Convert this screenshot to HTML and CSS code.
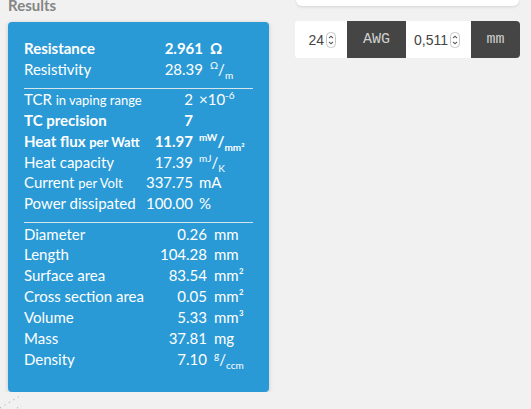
FILE: index.html
```html
<!DOCTYPE html>
<html lang="en">
<head>
    <meta charset="UTF-8">
    <meta name="viewport" content="width=device-width, initial-scale=1.0">
    <title>Coil Results</title>
    <link rel="stylesheet" href="styles.css">
</head>
<body>
    <div class="page">
        <div class="results-col">
            <h2>Results</h2>
            <div class="card">
                <div class="section sec1">
                    <span class="label strong">Resistance</span><span class="value strong">2.961</span><span class="unit strong">&Omega;</span>
                    <span class="label">Resistivity</span><span class="value">28.39</span><span class="unit"><sup>&Omega;</sup>/<sub>m</sub></span>
                </div>
                <hr>
                <div class="section sec2">
                    <span class="label">TCR <small>in vaping range</small></span><span class="value">2</span><span class="unit">&times;10<sup>-6</sup></span>
                    <span class="label strong">TC precision</span><span class="value strong">7</span><span class="unit"></span>
                    <span class="label strong">Heat flux <small>per Watt</small></span><span class="value strong">11.97</span><span class="unit strong"><sup>mW</sup>/<sub>mm&sup2;</sub></span>
                    <span class="label">Heat capacity</span><span class="value">17.39</span><span class="unit"><sup>mJ</sup>/<sub>K</sub></span>
                    <span class="label">Current <small>per Volt</small></span><span class="value">337.75</span><span class="unit">mA</span>
                    <span class="label">Power dissipated</span><span class="value">100.00</span><span class="unit">%</span>
                </div>
                <hr>
                <div class="section sec3">
                    <span class="label">Diameter</span><span class="value">0.26</span><span class="unit">mm</span>
                    <span class="label">Length</span><span class="value">104.28</span><span class="unit">mm</span>
                    <span class="label">Surface area</span><span class="value">83.54</span><span class="unit">mm&sup2;</span>
                    <span class="label">Cross section area</span><span class="value">0.05</span><span class="unit">mm&sup2;</span>
                    <span class="label">Volume</span><span class="value">5.33</span><span class="unit">mm&sup3;</span>
                    <span class="label">Mass</span><span class="value">37.81</span><span class="unit">mg</span>
                    <span class="label">Density</span><span class="value">7.10</span><span class="unit"><sup>g</sup>/<sub>ccm</sub></span>
                </div>
            </div>
        </div>
        <div class="wire-col">
            <div class="panel-top"></div>
            <div class="gauge-row">
                <div class="num-box first">24<svg class="spin" width="10" height="16" viewBox="0 0 10 16"><rect x="0.5" y="0.5" width="9" height="15" rx="4" fill="#fff" stroke="#c4c4c4"/><path d="M3 6.2 L5 4.2 L7 6.2 M3 9.8 L5 11.8 L7 9.8" fill="none" stroke="#555" stroke-width="1.1"/></svg></div>
                <div class="unit-box">AWG</div>
                <div class="num-box">0,511<svg class="spin" width="10" height="16" viewBox="0 0 10 16"><rect x="0.5" y="0.5" width="9" height="15" rx="4" fill="#fff" stroke="#c4c4c4"/><path d="M3 6.2 L5 4.2 L7 6.2 M3 9.8 L5 11.8 L7 9.8" fill="none" stroke="#555" stroke-width="1.1"/></svg></div>
                <div class="unit-box last">mm</div>
            </div>
        </div>
    </div>
    <svg class="corner-dots" width="24" height="16" viewBox="0 0 24 16"><path d="M0 15 L20 3" stroke="#bbb" stroke-width="1.2" stroke-dasharray="1.2 4" fill="none"/><path d="M17 15 L21 13" stroke="#bbb" stroke-width="1.2" stroke-dasharray="1.2 3" fill="none"/></svg>
</body>
</html>
```

FILE: styles.css
```css
body {
    margin: 0;
    padding: 0;
    background: #f1f1f1;
    font-family: Lato, 'Open Sans', sans-serif;
    overflow: hidden;
}
.page {
    display: flex;
    align-items: flex-start;
    padding-left: 8px;
}
.results-col {
    width: 261px;
    margin-top: -4px;
}
h2 {
    margin: 0;
    font-size: 15px;
    line-height: 18px;
    font-weight: 700;
    color: #858585;
}
.card {
    margin-top: 8px;
    background: #2a9ad6;
    color: #fff;
    border-radius: 4px;
    box-shadow: 0 1px 4px rgba(0,0,0,0.18);
    padding: 16px 16px 23px 16px;
}
.section {
    display: grid;
    grid-auto-rows: 20.83px;
    font-size: 15px;
    line-height: 20.83px;
}
.sec1 { grid-template-columns: 100px 79px 1fr; }
.sec2 { grid-template-columns: 100px 69px 1fr; }
.sec3 { grid-template-columns: 100px 83px 1fr; }
.section span {
    white-space: nowrap;
}
.label small {
    font-size: 13px;
}
.value {
    text-align: right;
}
.unit {
    padding-left: 7px;
}
.sec2 .unit {
    padding-left: 6px;
}
.strong {
    font-weight: 700;
}
sup, sub {
    font-size: 10px;
    line-height: 0;
    position: relative;
    vertical-align: baseline;
}
sup {
    top: -6px;
}
sub {
    top: 4px;
}
hr {
    border: none;
    border-top: 1px solid #d6e4ec;
    margin: 8px 0 0.5px 0;
}
.wire-col {
    margin-left: 26px;
    width: 225px;
}
.panel-top {
    height: 6px;
    margin: 0 1px 0 1px;
    background: #fff;
    border-radius: 0 0 6px 6px;
    box-shadow: 0 1px 3px rgba(0,0,0,0.12);
}
.gauge-row {
    display: flex;
    height: 37px;
    margin-top: 15px;
}
.num-box {
    background: #fff;
    color: #444;
    font-family: 'Liberation Sans', Arial, sans-serif;
    font-size: 14px;
    display: flex;
    align-items: center;
    justify-content: flex-end;
    gap: 2px;
    padding-right: 11px;
    width: 65px;
    box-sizing: border-box;
}
.num-box.first {
    width: 52px;
    border-radius: 3px 0 0 3px;
}
.spin {
    display: block;
}
.unit-box {
    background: #454545;
    color: #d0d0d0;
    font-family: 'Liberation Mono', 'Courier New', monospace;
    font-size: 15px;
    display: flex;
    align-items: center;
    justify-content: center;
    width: 59px;
}
.unit-box.last {
    width: 49px;
    border-radius: 0 4px 4px 0;
}
.corner-dots {
    position: absolute;
    left: 0;
    bottom: 0;
}
```
